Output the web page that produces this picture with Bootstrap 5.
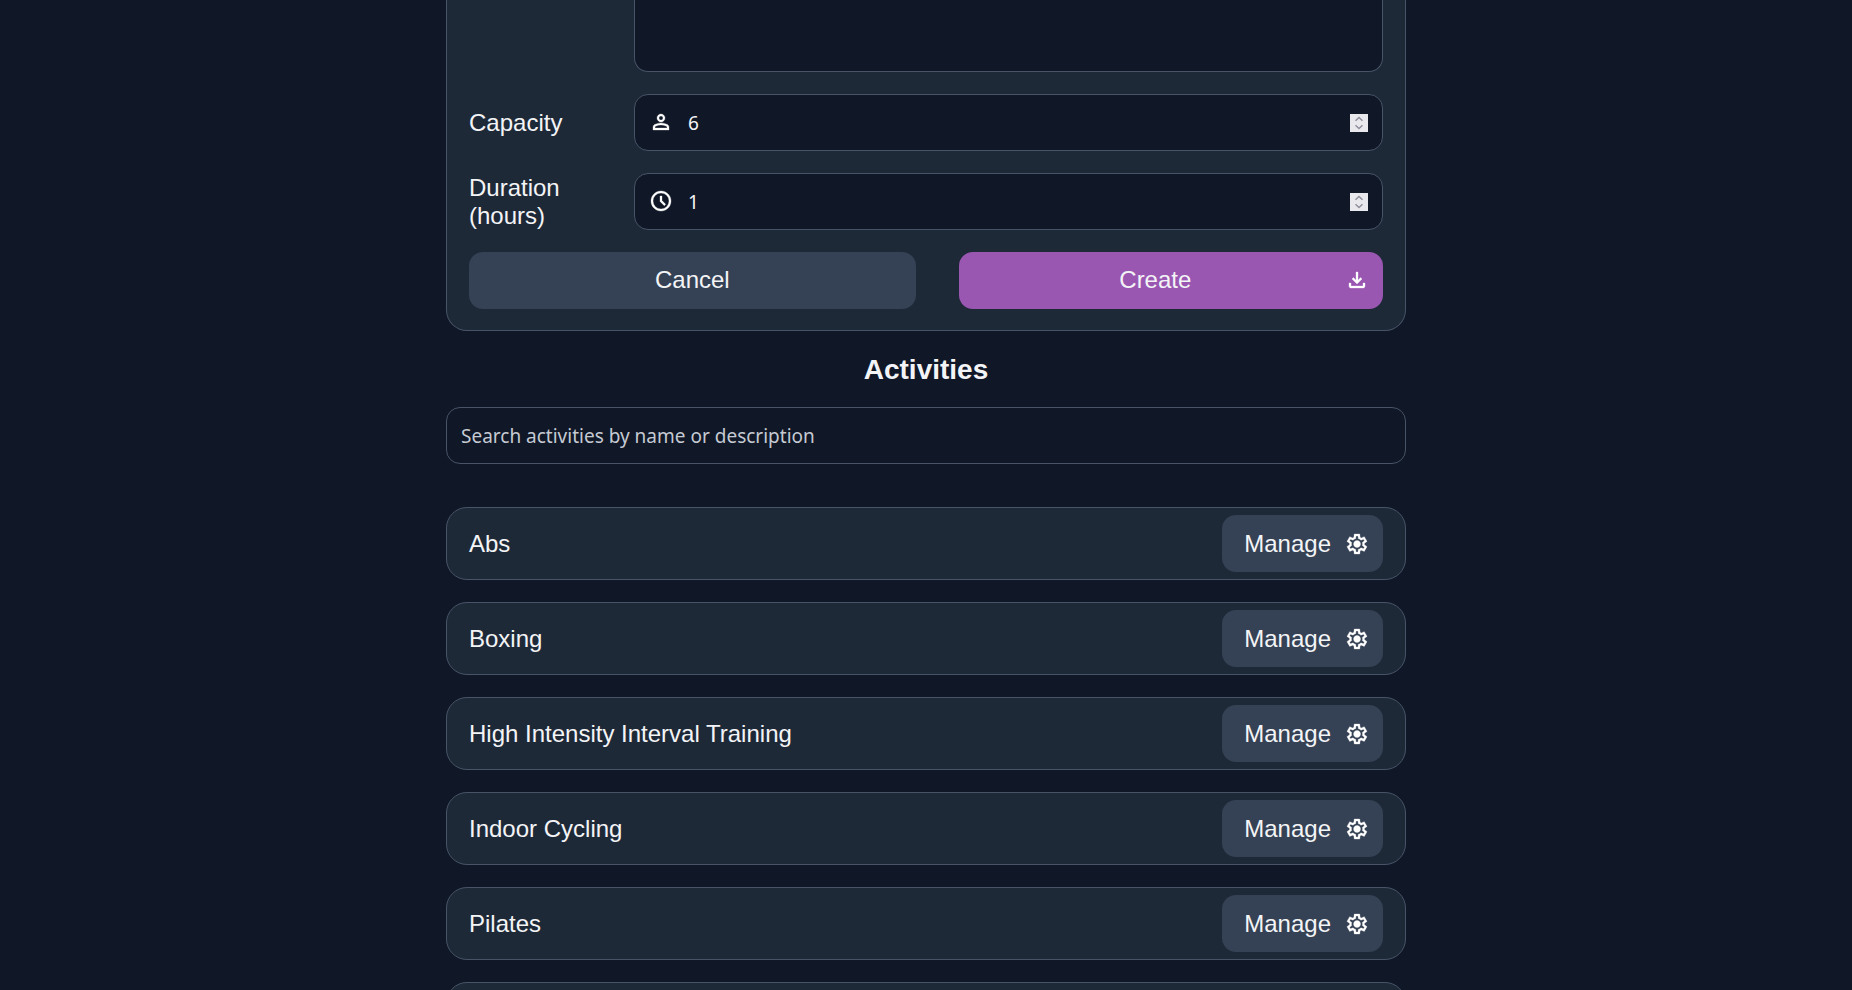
<!DOCTYPE html>
<html lang="en">
<head>
<meta charset="utf-8">
<meta name="viewport" content="width=device-width, initial-scale=1">
<title>Activities</title>
<link href="https://cdn.jsdelivr.net/npm/bootstrap@5.3.0/dist/css/bootstrap.min.css" rel="stylesheet">
<script src="https://cdn.jsdelivr.net/npm/bootstrap@5.3.0/dist/js/bootstrap.bundle.min.js" defer></script>
<style>
  :root { --page: #101726; --panel: #1e2938; --line: #475467; --slate: #354154; --ink: #f3f4f6; --accent: #9a57b2; }
  body { background: var(--page); color: var(--ink); font: 24px/28px "Liberation Sans", Arial, sans-serif; }
  .page-col { max-width: 960px; }
  .panel { background: var(--panel); border: 1px solid var(--line); border-radius: 21px; }
  .form-panel { border-top: 0; border-radius: 0 0 21px 21px; padding: 0 22px 21px; }
  .form-grid { display: grid; grid-template-columns: 122px 1fr; column-gap: 43px; row-gap: 22px; align-items: center; }
  .field { background: var(--page); color: var(--ink); border: 1px solid var(--line); border-radius: 14px; height: 57px; padding: 0 14px; font: 19px/28px "Noto Sans", sans-serif; }
  .field:focus { background: var(--page); color: var(--ink); border-color: var(--accent); box-shadow: none; }
  .field::placeholder { color: #c5cad3; opacity: 1; }
  textarea.field { height: 72px; border-top: 0; border-radius: 0 0 14px 14px; resize: none; display: block; }
  .with-icon { padding-left: 53px; }
  .field-icon { position: absolute; left: 15px; top: 16px; color: #fff; pointer-events: none; }
  .icon { width: 24px; height: 24px; fill: currentColor; stroke: currentColor; stroke-width: 12; flex: none; display: block; }
  .field::-webkit-inner-spin-button { -webkit-appearance: none; opacity: 1; width: 18px; height: 28px; background: url("data:image/svg+xml,%3Csvg xmlns='http://www.w3.org/2000/svg' viewBox='0 0 18 18' fill='none' stroke='%238f8f9d' stroke-width='1.5'%3E%3Cpath fill='%23e9e9ed' stroke='none' d='M0 0h18v18H0z'/%3E%3Cpath d='M5.5 6.8 9 3.5l3.500 3.300M5.500 11.200 9 14.500l3.500-3.300'/%3E%3C/svg%3E") center / 18px 18px no-repeat; }
  .action { --bs-btn-color: var(--ink); --bs-btn-bg: var(--slate); --bs-btn-hover-color: #fff; --bs-btn-hover-bg: #414e63; --bs-btn-active-color: #fff; --bs-btn-active-bg: #414e63; height: 57px; border: 0; border-radius: 14px; padding: 0 22px 1px; font-size: 24px; line-height: 28px; }
  .action-icon { display: flex; align-items: center; gap: 15px; padding-right: 14px; }
  .manage { gap: 14px; padding-top: 1px; padding-bottom: 0; }
  .action-icon .icon { color: #fff; }
  .action-accent { --bs-btn-bg: var(--accent); --bs-btn-hover-bg: #a868c0; --bs-btn-active-bg: #a868c0; }
  .form-actions { display: grid; grid-template-columns: 20fr 19fr; column-gap: 43px; grid-column: 1 / -1; }
  .section-title { font-size: 28px; line-height: 32px; font-weight: 700; margin: 23px 0 21px; }
  .activities { gap: 22px; margin: 43px 0 0; }
  .activity { min-height: 73px; padding: 0 22px; }
</style>
</head>
<body>
<svg class="d-none" aria-hidden="true">
  <symbol id="person" viewBox="0 -960 960 960"><path d="M480-480q-66 0-113-47t-47-113q0-66 47-113t113-47q66 0 113 47t47 113q0 66-47 113t-113 47ZM160-160v-112q0-34 17.500-62.500T224-378q62-31 126-46.500T480-440q66 0 130 15.500T736-378q29 15 46.500 43.500T800-272v112H160Zm80-80h480v-32q0-11-5.500-20T700-306q-54-27-109-40.500T480-360q-56 0-111 13.500T260-306q-9 5-14.500 14t-5.500 20v32Zm240-320q33 0 56.500-23.500T560-640q0-33-23.500-56.500T480-720q-33 0-56.500 23.500T400-640q0 33 23.500 56.500T480-560Z"/></symbol>
  <symbol id="clock" viewBox="0 -960 960 960"><path d="m612-292 56-56-148-148v-184h-80v216l172 172ZM480-80q-83 0-156-31.500T197-197q-54-54-85.500-127T80-480q0-83 31.500-156T197-763q54-54 127-85.500T480-880q83 0 156 31.500T763-763q54 54 85.500 127T880-480q0 83-31.500 156T763-197q-54 54-127 85.500T480-80Zm0-80q133 0 226.500-93.500T800-480q0-133-93.500-226.500T480-800q-133 0-226.500 93.500T160-480q0 133 93.500 226.500T480-160Z"/></symbol>
  <symbol id="download" viewBox="0 -960 960 960"><path d="M480-320 280-520l56-58 104 104v-326h80v326l104-104 56 58-200 200ZM240-160q-33 0-56.500-23.500T160-240v-120h80v120h480v-120h80v120q0 33-23.500 56.500T720-160H240Z"/></symbol>
  <symbol id="gear" viewBox="0 -960 960 960"><path d="m370-80-16-128q-13-5-24.500-12T307-235l-119 50L78-375l103-78q-1-7-1-13.500v-27q0-6.500 1-13.500L78-585l110-190 119 50q11-8 23-15t24-12l16-128h220l16 128q13 5 24.500 12t22.500 15l119-50 110 190-103 78q1 7 1 13.500v27q0 6.500-2 13.500l103 78-110 190-118-50q-11 8-23 15t-24 12L590-80H370Zm70-80h79l14-106q31-8 57.500-23.500T639-327l99 41 39-68-86-65q5-14 7-29.500t2-31.500q0-16-2-31.500t-7-29.500l86-65-39-68-99 42q-22-23-48.500-38.500T533-694l-13-106h-79l-14 106q-31 8-57.500 23.500T321-633l-99-41-39 68 86 64q-5 15-7 30t-2 32q0 16 2 31t7 30l-86 65 39 68 99-42q22 23 48.500 38.500T427-266l13 106Zm42-180q58 0 99-41t41-99q0-58-41-99t-99-41q-59 0-99.500 41T342-480q0 58 40.500 99t99.500 41Z"/></symbol>
</svg>
<main class="page-col mx-auto">
  <form class="panel form-panel">
    <div class="form-grid">
      <span></span>
      <textarea class="form-control field" aria-label="Description"></textarea>
      <label for="capacity">Capacity</label>
      <div class="position-relative">
        <svg class="icon field-icon" aria-hidden="true"><use href="#person"/></svg>
        <input type="number" class="form-control field with-icon" id="capacity" value="6" min="1">
      </div>
      <label for="duration">Duration (hours)</label>
      <div class="position-relative">
        <svg class="icon field-icon" aria-hidden="true"><use href="#clock"/></svg>
        <input type="number" class="form-control field with-icon" id="duration" value="1" min="1">
      </div>
      <div class="form-actions">
        <button type="button" class="btn action">Cancel</button>
        <button type="button" class="btn action action-icon action-accent"><span class="flex-grow-1">Create</span><svg class="icon" aria-hidden="true"><use href="#download"/></svg></button>
      </div>
    </div>
  </form>
  <h2 class="section-title text-center">Activities</h2>
  <input type="search" class="form-control field" placeholder="Search activities by name or description" aria-label="Search activities">
  <ul class="activities list-unstyled d-grid">
    <li class="panel activity d-flex align-items-center justify-content-between"><span>Abs</span><button type="button" class="btn action action-icon manage">Manage<svg class="icon" aria-hidden="true"><use href="#gear"/></svg></button></li>
    <li class="panel activity d-flex align-items-center justify-content-between"><span>Boxing</span><button type="button" class="btn action action-icon manage">Manage<svg class="icon" aria-hidden="true"><use href="#gear"/></svg></button></li>
    <li class="panel activity d-flex align-items-center justify-content-between"><span>High Intensity Interval Training</span><button type="button" class="btn action action-icon manage">Manage<svg class="icon" aria-hidden="true"><use href="#gear"/></svg></button></li>
    <li class="panel activity d-flex align-items-center justify-content-between"><span>Indoor Cycling</span><button type="button" class="btn action action-icon manage">Manage<svg class="icon" aria-hidden="true"><use href="#gear"/></svg></button></li>
    <li class="panel activity d-flex align-items-center justify-content-between"><span>Pilates</span><button type="button" class="btn action action-icon manage">Manage<svg class="icon" aria-hidden="true"><use href="#gear"/></svg></button></li>
    <li class="panel activity"></li>
  </ul>
</main>
</body>
</html>
